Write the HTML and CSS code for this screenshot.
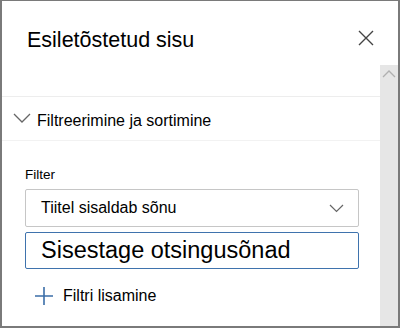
FILE: index.html
```html
<!DOCTYPE html>
<html lang="et">

<head>
    <meta charset="UTF-8">
    <meta name="viewport" content="width=device-width, initial-scale=1.0">
    <title>Esiletõstetud sisu</title>

    <link rel="stylesheet" href="styles.css">
</head>

<body>

    <div class="panel">

        <div class="panel-header">
            <h1 class="panel-title">Esiletõstetud sisu</h1>
            <div class="close-btn">
                <svg width="16" height="16" viewBox="0 0 16 16">
                    <path d="M1 1 L15 15 M15 1 L1 15" stroke="#444" stroke-width="1.4" fill="none" />
                </svg>
            </div>
        </div>

        <div class="panel-body">

            <div class="panel-content">

                <div class="section-header">
                    <svg class="section-chevron" width="18" height="10" viewBox="0 0 18 10">
                        <path d="M1 1 L9 9 L17 1" stroke="#666" stroke-width="1.3" fill="none" />
                    </svg>
                    <span class="section-title">Filtreerimine ja sortimine</span>
                </div>

                <div class="section-body">
                    <label class="field-label">Filter</label>

                    <div class="dropdown">
                        <span>Tiitel sisaldab sõnu</span>
                        <svg width="15" height="9" viewBox="0 0 15 9">
                            <path d="M1 1 L7.5 7.5 L14 1" stroke="#666" stroke-width="1.2" fill="none" />
                        </svg>
                    </div>

                    <div class="text-input">Sisestage otsingusõnad</div>

                    <div class="add-filter">
                        <svg width="18" height="18" viewBox="0 0 18 18">
                            <path d="M9 0 V18 M0 9 H18" stroke="#3b6ea8" stroke-width="1.6" fill="none" />
                        </svg>
                        <span>Filtri lisamine</span>
                    </div>
                </div>

            </div>

            <div class="scrollbar">
                <svg width="14" height="8" viewBox="0 0 14 8">
                    <path d="M1 7 L7 1 L13 7" stroke="#b0b0b0" stroke-width="1.3" fill="none" />
                </svg>
            </div>

        </div>

    </div>

</body>

</html>
```

FILE: styles.css
```css
*,
*::before,
*::after {
    margin: 0;
    padding: 0;
    box-sizing: border-box;
}

body {
    font-family: "Liberation Sans", Arial, sans-serif;
    color: #000;
    background: #fff;
}

.panel {
    width: 400px;
    height: 328px;
    border: 2px solid #7a7a7a;
    border-top-width: 1px;
    display: flex;
    flex-direction: column;
    overflow: hidden;
}

.panel-header {
    height: 64px;
    display: flex;
    align-items: flex-start;
    justify-content: space-between;
    padding: 26px 24px 0 25px;
}

.panel-title {
    font-size: 21.5px;
    font-weight: normal;
    line-height: 26px;
}

.close-btn {
    padding-top: 3px;
}

.panel-body {
    flex: 1;
    display: flex;
}

.panel-content {
    flex: 1;
    padding-top: 31px;
}

.section-header {
    display: flex;
    align-items: center;
    gap: 6px;
    height: 45px;
    padding-left: 11px;
    padding-top: 4px;
    border-top: 1px solid #ededed;
    border-bottom: 1px solid #f2f2f2;
}

.section-chevron {
    margin-top: -6px;
}

.section-title {
    font-size: 16px;
}

.section-body {
    padding: 26px 21px 0 23px;
}

.field-label {
    display: block;
    font-size: 13.5px;
    line-height: 16px;
    margin-bottom: 6px;
}

.dropdown {
    height: 38px;
    border: 1px solid #c6c6c6;
    border-radius: 2px;
    display: flex;
    align-items: center;
    justify-content: space-between;
    padding: 0 14px 0 15px;
    font-size: 16px;
}

.text-input {
    margin-top: 5px;
    height: 37px;
    border: 1px solid #3f73ad;
    border-radius: 2px;
    padding-left: 15px;
    font-size: 23.5px;
    line-height: 35px;
}

.add-filter {
    display: flex;
    align-items: center;
    gap: 10px;
    margin-top: 18px;
    padding-left: 10px;
    font-size: 16px;
}

.scrollbar {
    width: 18px;
    background: #e6e6e6;
    display: flex;
    justify-content: center;
    padding-top: 5px;
}

.scrollbar svg {
    display: block;
}
```
